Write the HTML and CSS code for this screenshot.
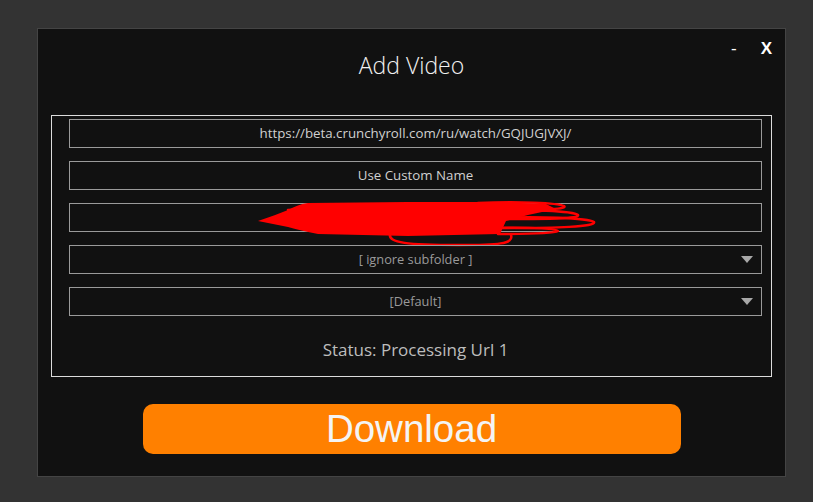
FILE: index.html
```html
<!DOCTYPE html>
<html lang="en">
<head>
    <meta charset="UTF-8">
    <title>Add Video</title>
    <link rel="stylesheet" href="styles.css">
</head>
<body>
    <div class="window">
        <div class="header">
            <div></div>
            <h1 class="title">Add Video</h1>
            <div class="controls">
                <span class="min">-</span>
                <span class="close">X</span>
            </div>
        </div>

        <div class="panel">
            <div class="field">https://beta.crunchyroll.com/ru/watch/GQJUGJVXJ/</div>
            <div class="field">Use Custom Name</div>
            <div class="field redacted">
                <!-- red marker scribble over the hidden name -->
                <svg class="scribble" width="340" height="48" viewBox="0 0 340 48">
                    <path d="M0 20 C12 16 22 12 30 9 C36 6 42 3 50 2 L150 1 L233 1 L288 3 L298 8 L270 14 L248 20 L242 33 L150 35 L60 33 C48 31 38 28 30 26 C20 24 10 22 0 20 Z" fill="#ff0000"/>
                    <g fill="none" stroke="#ff0000" stroke-width="2.5" stroke-linecap="round">
                        <path d="M220 2 C260 0 300 2 306 5 C310 8 290 9 240 10"/>
                        <path d="M230 10 C270 8 315 10 320 14 C322 18 290 18 240 18"/>
                        <path d="M235 17 C280 15 330 17 336 21 C338 26 300 27 240 27"/>
                        <path d="M230 27 C280 26 300 28 300 30 C295 33 260 33 240 33"/>
                        <path d="M132 33 C130 42 150 44 200 44 C240 44 256 43 253 34"/>
                        <path d="M30 9 C60 7 90 8 110 9"/>
                    </g>
                </svg>
            </div>
            <div class="field select">[ ignore subfolder ]<span class="arrow"></span></div>
            <div class="field select">[Default]<span class="arrow"></span></div>
            <div class="status">Status: Processing Url 1</div>
        </div>

        <button class="download">Download</button>
    </div>
</body>
</html>
```

FILE: styles.css
```css
body {
    margin: 0;
    background-color: #333333;
    font-family: "Open Sans", "Noto Sans", sans-serif;
}
.window {
    box-sizing: border-box;
    width: 749px;
    height: 449px;
    margin: 28px 0 0 37px;
    background-color: #111111;
    border: 1px solid #444444;
}
.header {
    display: grid;
    grid-template-columns: 1fr auto 1fr;
    height: 86px;
}
.title {
    margin: 0;
    padding-top: 20px;
    font-size: 23px;
    font-weight: 300;
    line-height: 32px;
    color: #f2f2f2;
}
.controls {
    justify-self: end;
    display: flex;
    gap: 24px;
    padding: 10px 13px 0 0;
    color: #ffffff;
    font-family: "Liberation Sans", Arial, sans-serif;
    font-size: 17px;
    line-height: 20px;
}
.min {
    font-weight: normal;
}
.close {
    font-weight: bold;
}
.panel {
    display: flex;
    flex-direction: column;
    gap: 13px;
    margin: 0 13px;
    padding: 3px 9px 0 17px;
    height: 262px;
    box-sizing: border-box;
    border: 1px solid #dcdcdc;
}
.field {
    position: relative;
    box-sizing: border-box;
    height: 29px;
    border: 1px solid #9a9a9a;
    text-align: center;
    font-size: 13.3px;
    line-height: 27px;
    color: #d0d0d0;
}
.field.select {
    font-size: 12.8px;
    color: #9a9a9a;
}
.arrow {
    position: absolute;
    right: 8px;
    top: 10px;
    border-left: 6px solid transparent;
    border-right: 6px solid transparent;
    border-top: 7px solid #a8a8a8;
}
.scribble {
    position: absolute;
    left: 188px;
    top: -3px;
    overflow: visible;
}
.status {
    margin-top: 9px;
    text-align: center;
    font-size: 17px;
    line-height: 24px;
    color: #bdbdbd;
}
.download {
    display: block;
    width: 538px;
    height: 50px;
    margin: 27px auto 0;
    border: none;
    border-radius: 10px;
    background-color: #ff8000;
    color: #f4f4f4;
    font-family: "Liberation Sans", Arial, sans-serif;
    font-size: 38.5px;
    line-height: 50px;
    padding: 0;
}
```
